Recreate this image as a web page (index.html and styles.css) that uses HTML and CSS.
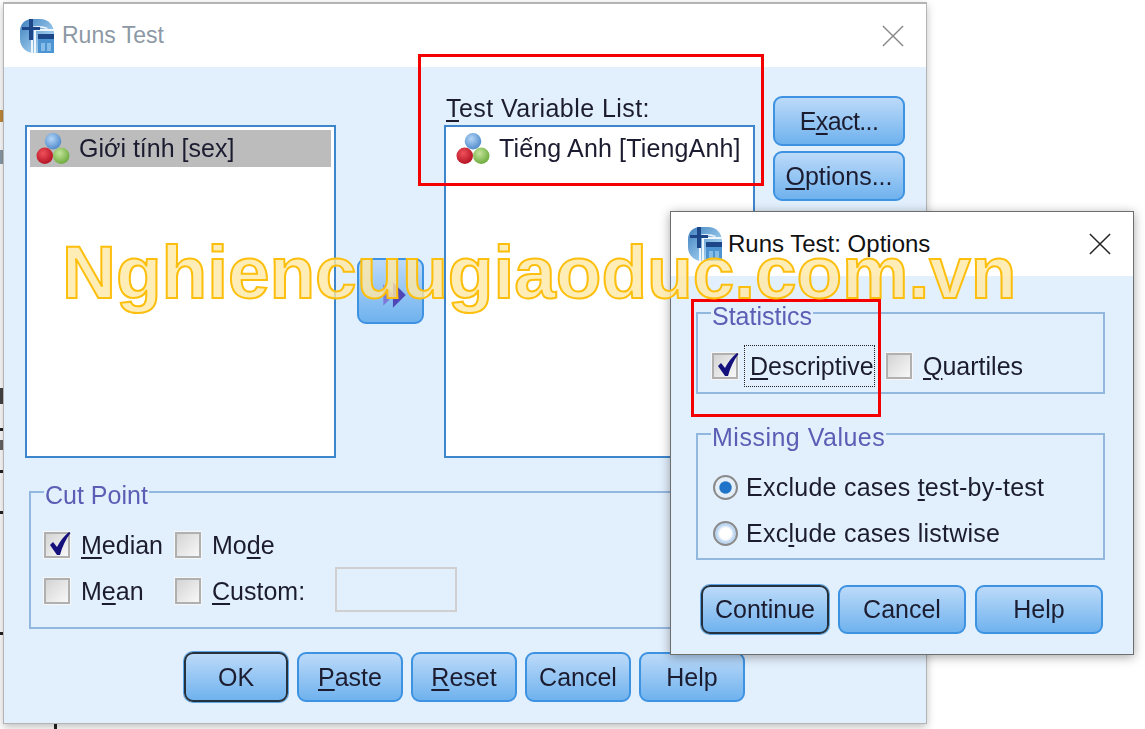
FILE: index.html
```html
<!DOCTYPE html>
<html lang="en">
<head>
  <meta charset="UTF-8">
  <title>Runs Test</title>
  <link rel="stylesheet" href="styles.css">
</head>
<body>
  <svg width="0" height="0" class="defs">
    <defs>
      <radialGradient id="ballBlue" cx="40%" cy="35%" r="70%"><stop offset="0" stop-color="#b5d6f7"/><stop offset="1" stop-color="#4a86c8"/></radialGradient>
      <radialGradient id="ballRed" cx="40%" cy="35%" r="70%"><stop offset="0" stop-color="#f0505a"/><stop offset="1" stop-color="#b01020"/></radialGradient>
      <radialGradient id="ballGreen" cx="40%" cy="35%" r="70%"><stop offset="0" stop-color="#c4e49a"/><stop offset="1" stop-color="#68a838"/></radialGradient>
      <linearGradient id="iconBack" x1="0" y1="0" x2="1" y2="1"><stop offset="0" stop-color="#3d7fbe"/><stop offset="0.6" stop-color="#8fc0e6"/><stop offset="1" stop-color="#c9e0f2"/></linearGradient>
      <symbol id="balls" viewBox="0 0 34 32">
        <circle cx="17" cy="9" r="8" fill="url(#ballBlue)"/>
        <circle cx="9" cy="23" r="8" fill="url(#ballRed)"/>
        <circle cx="25" cy="23" r="8" fill="url(#ballGreen)"/>
      </symbol>
      <symbol id="appicon" viewBox="0 0 34 34">
        <path d="M12 0h8c8 0 14 6 14 14v20H14C6 34 0 28 0 20V12C0 5 5 0 12 0z" fill="url(#iconBack)"/>
        <path d="M16 34V12h18v-2H14v24zM11 34V8c6-2 13-1 17 1l-1 1c-4-1-9-2-14-1v25z" fill="#eef6fc"/>
        <path d="M9 0h4v8h7v3h-7v10H9V11H2V8h7z" fill="#1c4688"/>
        <path d="M18 15h16v19H18z" fill="#4d94d2"/>
        <path d="M18 15h16v5H18z" fill="#1c4688"/>
        <path d="M21 24h4v8h-4zM27 24h4v8h-4z" fill="#86bce8"/>
      </symbol>
      <symbol id="tick" viewBox="0 0 26 26">
        <path d="M4 14l3-3 4 5C14 10 18 5 23 1l1.500 1C20 8 16 16 14 24h-3z" fill="#14107c"/>
      </symbol>
    </defs>
  </svg>

  <!-- bits of the document behind the dialogs -->
  <div class="scrap scrap-a"></div>
  <div class="scrap scrap-b"></div>
  <div class="scrap scrap-c"></div>
  <div class="scrap scrap-d"></div>
  <div class="scrap scrap-f"></div>
  <div class="scrap scrap-g"></div>
  <div class="scrap scrap-h"></div>
  <div class="scrap scrap-i"></div>
  <div class="scrap scrap-e"></div>

  <section class="win win-main">
    <header class="titlebar">
      <svg class="appicon"><use href="#appicon"/></svg>
      <span class="title title-off">Runs Test</span>
      <svg class="close close-off" viewBox="0 0 24 24"><path d="M1 1l22 22M23 1L1 23"/></svg>
    </header>
    <div class="main-body">
      <div class="pickers">
        <div class="listbox list-source">
          <div class="var var-picked"><svg class="balls"><use href="#balls"/></svg>Giới tính [sex]</div>
        </div>
        <button class="btn btn-arrow"><svg viewBox="0 0 24 28"><path d="M2 4l10 10L2 24z" fill="#7c7ad8"/><path d="M11 2l12 12-12 12z" fill="#4f46b8"/></svg></button>
        <div class="target">
          <label class="target-label"><u>T</u>est Variable List:</label>
          <div class="listbox list-target">
            <div class="var"><svg class="balls"><use href="#balls"/></svg>Tiếng Anh [TiengAnh]</div>
          </div>
        </div>
        <div class="side-btns">
          <button class="btn btn-exact">E<u>x</u>act...</button>
          <button class="btn"><u>O</u>ptions...</button>
        </div>
      </div>

      <fieldset class="group group-cut">
        <legend>Cut Point</legend>
        <div class="cut-grid">
          <div class="opt"><span class="check"><svg><use href="#tick"/></svg></span><span><u>M</u>edian</span></div>
          <div class="opt"><span class="check"></span><span>Mo<u>d</u>e</span></div>
          <span></span>
          <div class="opt"><span class="check"></span><span>M<u>e</u>an</span></div>
          <div class="opt"><span class="check"></span><span><u>C</u>ustom:</span></div>
          <div class="custom-box"></div>
        </div>
      </fieldset>

      <div class="main-btns">
        <button class="btn btn-default">OK</button>
        <button class="btn"><u>P</u>aste</button>
        <button class="btn"><u>R</u>eset</button>
        <button class="btn">Cancel</button>
        <button class="btn">Help</button>
      </div>
    </div>
  </section>

  <section class="win win-options">
    <header class="titlebar">
      <svg class="appicon"><use href="#appicon"/></svg>
      <span class="title">Runs Test: Options</span>
      <svg class="close" viewBox="0 0 24 24"><path d="M1 1l22 22M23 1L1 23"/></svg>
    </header>
    <div class="options-body">
      <fieldset class="group group-stats">
        <legend>Statistics</legend>
        <div class="stats-row">
          <div class="opt"><span class="check"><svg><use href="#tick"/></svg></span><span class="focused"><u>D</u>escriptive</span></div>
          <div class="opt"><span class="check"></span><span><u>Q</u>uartiles</span></div>
        </div>
      </fieldset>
      <fieldset class="group group-missing">
        <legend>Missing Values</legend>
        <div class="missing-rows">
          <div class="opt"><span class="radio radio-on"></span><span>Exclude cases <u>t</u>est-by-test</span></div>
          <div class="opt"><span class="radio"></span><span>Exc<u>l</u>ude cases listwise</span></div>
        </div>
      </fieldset>
      <div class="options-btns">
        <button class="btn btn-default">Continue</button>
        <button class="btn">Cancel</button>
        <button class="btn">Help</button>
      </div>
    </div>
  </section>

  <div class="mark mark-list"></div>
  <div class="mark mark-stats"></div>
  <div class="watermark">Nghiencuugiaoduc.com.vn</div>
</body>
</html>
```

FILE: styles.css
```css
body{
  margin: 0;
  width: 1145px;
  height: 729px;
  overflow: hidden;
  position: relative;
  background-color: #fff;
  font-family: "Liberation Sans", Arial, sans-serif;
  font-size: 25px;
  color: #1c1c30;
}
.defs{
  position: absolute;
}
u{
  text-underline-offset: 3px;
  text-decoration-thickness: 2px;
}
/* background scraps */
.scrap{
  position: absolute;
  left: 0;
  width: 3px;
  height: 3px;
  background-color: #222;
}
.scrap-a{ top: 110px; height: 12px; background-color: #c08a3c; }
.scrap-b{ top: 150px; height: 14px; background-color: #8a9aa8; }
.scrap-c{ top: 388px; height: 16px; background-color: #444; }
.scrap-d{ top: 428px; }
.scrap-f{ top: 440px; height: 10px; background-color: #666; }
.scrap-g{ top: 470px; }
.scrap-h{ top: 511px; }
.scrap-i{ top: 632px; }
.scrap-e{ left: 54px; top: 722px; height: 7px; }

/* windows */
.win{
  position: absolute;
  box-sizing: border-box;
  display: flex;
  flex-direction: column;
  background-color: #e2effc;
  filter: blur(0.4px);
}
.win-main{
  left: 3px;
  top: 2px;
  width: 924px;
  height: 722px;
  border: 1px solid #b4b4b4;
  border-top-width: 2px;
  box-shadow: 0 3px 8px rgba(0,0,0,0.25);
}
.win-options{
  left: 670px;
  top: 211px;
  width: 464px;
  height: 444px;
  border: 1px solid #6e6e6e;
  box-shadow: 0 2px 10px rgba(0,0,0,0.35);
}
.titlebar{
  flex: 0 0 auto;
  display: flex;
  align-items: center;
  background-color: #fff;
  padding: 0 22px 0 16px;
  height: 63px;
}
.win-options .titlebar{
  height: 64px;
  padding: 0 22px 0 17px;
}
.appicon{
  width: 34px;
  height: 34px;
  margin-right: 8px;
}
.win-options .appicon{
  margin-right: 6px;
}
.title{
  flex: 1 1 auto;
  font-size: 24px;
  color: #111;
}
.title-off{
  font-size: 23px;
  color: #8c98a4;
}
.close{
  width: 22px;
  height: 22px;
  fill: none;
  stroke: #222;
  stroke-width: 1.6;
}
.close-off{
  stroke: #8a8a8a;
}

/* main dialog */
.main-body{
  flex: 1 1 auto;
  display: flex;
  flex-direction: column;
  padding: 29px 21px 0 21px;
}
.pickers{
  display: flex;
  height: 362px;
}
.listbox{
  box-sizing: border-box;
  width: 311px;
  height: 333px;
  border: 2px solid #3d86cc;
  background-color: #fff;
  padding: 3px;
}
.list-source{
  margin-top: 29px;
}
.var{
  display: flex;
  align-items: center;
  height: 37px;
  white-space: nowrap;
}
.var-picked{
  background-color: #bcbcbc;
}
.balls{
  width: 36px;
  height: 33px;
  margin: 0 8px 0 5px;
}
.list-target .balls{
  margin-left: 6px;
}
.target{
  display: flex;
  flex-direction: column;
}
.target-label{
  height: 29px;
  line-height: 25px;
  padding-left: 2px;
  white-space: nowrap;
  letter-spacing: 0.45px;
}
.list-target .var{
  letter-spacing: 0.15px;
}
.side-btns{
  display: flex;
  flex-direction: column;
  gap: 5px;
  margin-left: 18px;
}

/* buttons */
.btn{
  box-sizing: border-box;
  width: 132px;
  height: 50px;
  padding: 0;
  font: inherit;
  color: inherit;
  border: 2px solid #3d92e2;
  border-radius: 9px;
  background: linear-gradient(#bcdaf9, #6fb2ee);
}
.btn-exact{
  letter-spacing: -0.6px;
}
.btn-arrow{
  flex: 0 0 auto;
  align-self: flex-start;
  width: 67px;
  height: 66px;
  margin: 162px 20px 0 21px;
  padding: 8px 0 0 6px;
}
.btn-arrow svg{
  width: 26px;
  height: 30px;
  display: block;
  margin: 0 auto;
}
.btn-default{
  border-color: #25323e;
  box-shadow: 0 0 0 1px #5aa5e6;
}
.main-btns{
  display: flex;
  gap: 8px;
  margin: 23px 0 0 159px;
}
.main-btns .btn{
  width: 106px;
}
.main-btns .btn-default{
  width: 104px;
  margin-right: 1px;
}
.options-body{
  flex: 1 1 auto;
  display: flex;
  flex-direction: column;
  padding: 21px 28px 0 25px;
}
.options-btns{
  display: flex;
  gap: 9px;
  margin: 25px 0 0 5px;
}
.options-btns .btn{
  width: 128px;
  height: 49px;
}

/* groups */
.group{
  margin: 0;
  min-width: 0;
  box-sizing: border-box;
  border: 2px solid #93b8df;
  padding: 0;
}
.group legend{
  padding: 6px 1px 0;
  margin-left: 13px;
  line-height: 26px;
  color: #5a5eb4;
}
.group-cut{
  width: 900px;
  height: 153px;
  margin: 18px 0 0 4px;
}
.group-stats{
  height: 97px;
}
.group-missing{
  height: 142px;
  margin-top: 24px;
}
.group-missing legend{
  letter-spacing: 0.5px;
}
.opt{
  display: flex;
  align-items: center;
  white-space: nowrap;
  height: 46px;
}
.check{
  flex: 0 0 auto;
  box-sizing: border-box;
  width: 26px;
  height: 26px;
  border: 2px solid #b0b0b0;
  outline: 1px solid #f6f6f6;
  background: linear-gradient(135deg, #d4d4d4, #f8f8f8);
  margin-right: 11px;
  position: relative;
}
.check svg{
  position: absolute;
  left: 0;
  top: -3px;
  width: 26px;
  height: 26px;
}
.cut-grid{
  display: grid;
  grid-template-columns: 131px 160px 122px;
  grid-auto-rows: 46px;
  align-items: center;
  padding: 14px 0 0 13px;
}
.custom-box{
  box-sizing: border-box;
  width: 122px;
  height: 45px;
  margin-bottom: 4px;
  border: 2px solid #cfcfcf;
}
.stats-row{
  display: flex;
  padding: 14px 0 0 14px;
}
.focused{
  box-sizing: border-box;
  width: 131px;
  height: 42px;
  line-height: 42px;
  outline: 1px dotted #222;
  outline-offset: -1px;
  padding-left: 6px;
  margin: 0 11px 0 -5px;
  overflow: hidden;
}
.missing-rows{
  padding: 14px 0 0 15px;
  letter-spacing: 0.25px;
}
.radio{
  flex: 0 0 auto;
  box-sizing: border-box;
  width: 25px;
  height: 25px;
  border-radius: 50%;
  border: 2px solid #8a8a8a;
  background: radial-gradient(circle, #fff 0 38%, #b8d4f0 60%, #eef5fb 100%);
  margin-right: 8px;
}
.radio-on{
  background: radial-gradient(circle, #1f74c8 0 38%, #e4eef8 45%, #e4eef8 100%);
}

/* overlays */
.mark{
  position: absolute;
  box-sizing: border-box;
  border: 3px solid #f50000;
}
.mark-list{
  left: 418px;
  top: 54px;
  width: 346px;
  height: 132px;
}
.mark-stats{
  left: 691px;
  top: 299px;
  width: 190px;
  height: 118px;
}
.watermark{
  position: absolute;
  left: 62px;
  top: 228px;
  font-size: 74.7px;
  line-height: 88px;
  font-weight: bold;
  white-space: nowrap;
  color: rgba(255,232,165,0.8);
  -webkit-text-stroke: 2px #fdbf0e;
}
```
